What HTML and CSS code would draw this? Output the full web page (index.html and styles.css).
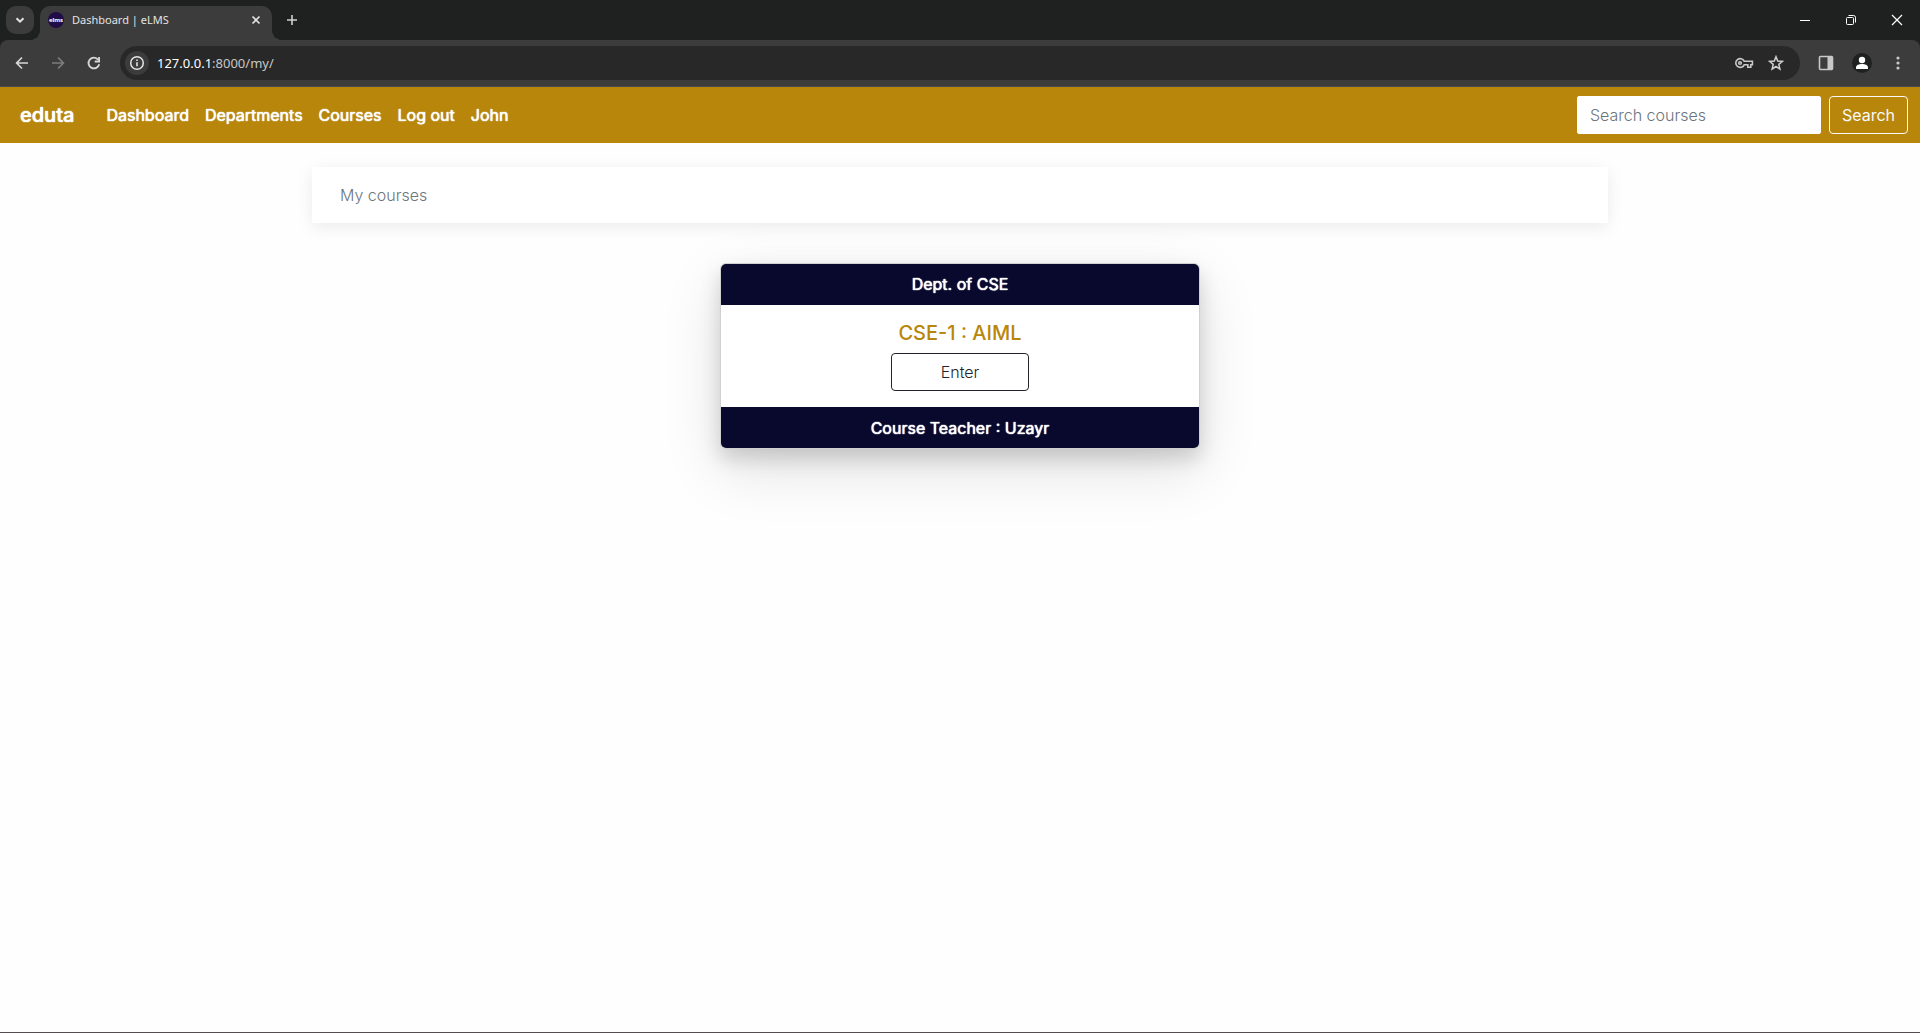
FILE: index.html
```html
<!DOCTYPE html>
<html lang="en">
<head>
<meta charset="utf-8">
<title>Dashboard | eLMS</title>
<link rel="stylesheet" href="styles.css">
</head>
<body>
<header class="browser">
  <div class="tabstrip">
    <button class="tab-search" aria-label="Search tabs"><svg width="28" height="28" viewBox="0 0 28 28"><path d="M10.5 12.2l3.5 3.5 3.5-3.5" fill="none" stroke="#e3e3e3" stroke-width="2"/></svg></button>
    <div class="tab">
      <svg class="favicon" width="16" height="16" viewBox="0 0 16 16"><circle cx="8" cy="8" r="8" fill="#210d48"/><text x="8" y="10" text-anchor="middle" class="favicon-text">elms</text></svg>
      <span class="tab-title">Dashboard | eLMS</span>
      <button class="icon-btn tab-close" aria-label="Close tab"><svg width="16" height="16" viewBox="0 0 16 16"><path d="M4.5 4.5l7 7M11.5 4.5l-7 7" stroke="#e3e3e3" stroke-width="1.6"/></svg></button>
    </div>
    <button class="icon-btn new-tab" aria-label="New tab"><svg width="16" height="16" viewBox="0 0 16 16"><path d="M8 3v10M3 8h10" stroke="#d0d0d0" stroke-width="1.6"/></svg></button>
    <div class="window-controls">
      <button class="icon-btn" aria-label="Minimize"><svg width="16" height="16" viewBox="0 0 16 16"><path d="M3 8.5h10" stroke="#fff"/></svg></button>
      <button class="icon-btn" aria-label="Restore"><svg width="16" height="16" viewBox="0 0 16 16" fill="none" stroke="#fff"><rect x="3.500" y="5.500" width="7" height="7" rx="1"/><path d="M5.500 3.500h5a2 2 0 0 1 2 2v5"/></svg></button>
      <button class="icon-btn" aria-label="Close"><svg width="16" height="16" viewBox="0 0 16 16"><path d="M3 3l10 10M13 3L3 13" stroke="#fff" stroke-width="1.200"/></svg></button>
    </div>
  </div>
  <div class="toolbar">
    <div class="nav-buttons">
      <button class="icon-btn" aria-label="Back"><svg width="16" height="16" viewBox="0 0 16 16"><path d="M14 8H3M8 2.500L2.600 8 8 13.500" fill="none" stroke="#d8d8d8" stroke-width="1.700"/></svg></button>
      <button class="icon-btn" aria-label="Forward"><svg width="16" height="16" viewBox="0 0 16 16"><path d="M2 8h11M8 2.500L13.400 8 8 13.500" fill="none" stroke="#7c7c7c" stroke-width="1.700"/></svg></button>
      <button class="icon-btn" aria-label="Reload"><svg width="16" height="16" viewBox="0 0 16 16"><path d="M13.200 9.200A5.400 5.400 0 1 1 12.200 4.700" fill="none" stroke="#d8d8d8" stroke-width="1.800"/><path d="M13.100 2v4.500H8.700" fill="none" stroke="#d8d8d8" stroke-width="1.800"/></svg></button>
    </div>
    <div class="omnibox">
      <button class="site-info" aria-label="Site information"><svg width="16" height="16" viewBox="0 0 16 16"><circle cx="8" cy="8" r="6.300" fill="none" stroke="#e3e3e3" stroke-width="1.500"/><path d="M8 7.200v4M8 4.500v1.600" stroke="#e3e3e3" stroke-width="1.600"/></svg></button>
      <span class="url">127.0.0.1<span class="url-rest">:8000/my/</span></span>
      <button class="icon-btn" aria-label="Passwords"><svg width="20" height="20" viewBox="0 0 20 20" fill="none" stroke="#c8c8c8" stroke-width="1.600"><path d="M10.200 8.200h8.200v3.600h-1.600v2.400h-3v-2.400h-3.600A4.400 4.400 0 1 1 10.200 8.200z"/><circle cx="6" cy="10" r="1.300"/></svg></button>
      <button class="icon-btn" aria-label="Bookmark"><svg width="16" height="16" viewBox="0 0 16 16"><path d="M8 1.700l1.700 4.300 4.700.4-3.600 3 1.100 4.600L8 11.500 4.100 14l1.100-4.600-3.600-3 4.700-.4z" fill="none" stroke="#d0d0d0" stroke-width="1.500"/></svg></button>
    </div>
    <div class="toolbar-actions">
      <button class="icon-btn" aria-label="Side panel"><svg width="16" height="16" viewBox="0 0 16 16"><rect x="1.500" y="1.500" width="13" height="13" rx="1" fill="none" stroke="#c8c8c8" stroke-width="1.600"/><path d="M9.500 1.500h5v13h-5z" fill="#c8c8c8"/></svg></button>
      <button class="icon-btn" aria-label="Profile"><svg width="20" height="20" viewBox="0 0 20 20"><circle cx="10" cy="10" r="10" fill="#1f2120"/><circle cx="10" cy="7" r="3.200" fill="#fff"/><path d="M4 16v-1.500c0-2.400 3-3.500 6-3.500s6 1.100 6 3.500V16z" fill="#fff"/></svg></button>
      <button class="icon-btn" aria-label="Menu"><svg width="16" height="16" viewBox="0 0 16 16" fill="#c8c8c8"><circle cx="8" cy="3" r="1.600"/><circle cx="8" cy="8" r="1.600"/><circle cx="8" cy="13" r="1.600"/></svg></button>
    </div>
  </div>
</header>
<nav class="navbar">
  <a class="brand" href="#">eduta</a>
  <ul class="nav-links">
    <li><a href="#">Dashboard</a></li>
    <li><a href="#">Departments</a></li>
    <li><a href="#">Courses</a></li>
    <li><a href="#">Log out</a></li>
    <li><a href="#">John</a></li>
  </ul>
  <form class="search">
    <input class="search-input" type="search" placeholder="Search courses" aria-label="Search courses">
    <button class="btn btn-light" type="button">Search</button>
  </form>
</nav>
<main class="container">
  <div class="breadcrumb">My courses</div>
  <section class="card">
    <header class="card-band card-header">Dept. of CSE</header>
    <div class="card-body">
      <h5 class="card-title">CSE-1 : AIML</h5>
      <button class="btn btn-dark" type="button">Enter</button>
    </div>
    <footer class="card-band card-footer">Course Teacher : Uzayr</footer>
  </section>
</main>
</body>
</html>
```
FILE: styles.css
```css
* { box-sizing: border-box; }

body {
  margin: 0;
  min-height: 100vh;
  display: flex;
  flex-direction: column;
  background: #fefefe;
  border-bottom: 1px solid #574a4a;
  color: #212529;
  font: 300 16px/24px Inter, sans-serif;
}

button, input { font: inherit; }
a { color: inherit; text-decoration: none; }
svg { display: block; }

/* Browser frame */
.browser {
  background: #1f2120;
  font-family: "Noto Sans", sans-serif;
  font-weight: 400;
}

.tabstrip {
  display: flex;
  align-items: center;
  height: 40px;
  padding: 0 6px;
}

.icon-btn {
  display: grid;
  place-items: center;
  padding: 0;
  border: 0;
  background: none;
}

.tab-search {
  width: 28px;
  height: 28px;
  padding: 0;
  border: 0;
  border-radius: 10px;
  background: #3c3c3c;
}

.tab {
  position: relative;
  display: flex;
  align-items: center;
  gap: 8px;
  align-self: flex-end;
  width: 232px;
  height: 34px;
  margin-left: 6px;
  padding: 0 8px 6px;
  border-radius: 10px 10px 0 0;
  background: #3c3c3c;
}

.tab::before,
.tab::after {
  content: "";
  position: absolute;
  bottom: 0;
  width: 10px;
  height: 10px;
}

.tab::before {
  left: -10px;
  background: radial-gradient(circle at 0 0, transparent 10px, #3c3c3c 10px);
}

.tab::after {
  right: -10px;
  background: radial-gradient(circle at 100% 0, transparent 10px, #3c3c3c 10px);
}

.favicon-text {
  fill: #fff;
  font: 700 6px "Noto Sans", sans-serif;
}

.tab-title {
  flex: 1;
  color: #e3e3e3;
  font-size: 11px;
  line-height: 16px;
}

.new-tab { margin-left: 12px; }

.window-controls {
  display: flex;
  gap: 30px;
  margin-left: auto;
  padding-right: 9px;
}

.toolbar {
  display: flex;
  align-items: center;
  height: 47px;
  padding: 0 14px;
  border-bottom: 1px solid #4a4a4a;
  border-radius: 8px 8px 0 0;
  background: #3c3c3c;
}

.nav-buttons {
  display: flex;
  gap: 20px;
  margin-right: 18px;
}

.omnibox {
  display: flex;
  flex: 1;
  align-items: center;
  gap: 14px;
  height: 34px;
  padding: 0 16px 0 5px;
  border-radius: 17px;
  background: #282828;
}

.site-info {
  display: grid;
  place-items: center;
  width: 24px;
  height: 24px;
  padding: 0;
  border: 0;
  border-radius: 12px;
  background: #3c3c3c;
}

.url {
  flex: 1;
  margin-left: -6px;
  color: #fff;
  font-size: 13px;
  line-height: 20px;
}

.url-rest { color: #c7c7c7; }

.toolbar-actions {
  display: flex;
  align-items: center;
  gap: 18px;
  margin-left: 18px;
}

/* Site navigation */
.navbar {
  display: flex;
  align-items: center;
  padding: 8px 12px 8px 20px;
  background: #b8860b;
  color: #fff;
}

.brand,
.nav-links,
.card-band {
  font-weight: 400;
  text-shadow: 0 0 1px currentColor, 0 0 1px currentColor;
}

.brand {
  margin-right: 32px;
  font-size: 20px;
  font-weight: 500;
  line-height: 40px;
}

.nav-links {
  display: flex;
  gap: 16px;
  margin: 0;
  padding: 0;
  list-style: none;
}

.search {
  display: flex;
  gap: 8px;
  margin-left: auto;
}

.search-input {
  width: 244px;
  height: 38px;
  padding: 6px 12px;
  border: 1px solid #fff;
  border-radius: 2px;
  background: #fff;
  color: #212529;
}

.search-input::placeholder { color: #6c757d; opacity: 1; }

.btn {
  height: 38px;
  padding: 6px 12px;
  border: 1px solid;
  border-radius: 4px;
  background: transparent;
}

.btn-light { color: #f8f9fa; font-weight: 400; }
.btn-dark { width: 138px; color: #212529; }

/* Page content */
.container {
  width: 100%;
  max-width: 1320px;
  margin: 24px auto 0;
  padding: 0 12px;
}

.breadcrumb {
  padding: 16px 28px;
  background: #fff;
  box-shadow: 0 4px 16px rgba(0, 0, 0, 0.08);
  color: #6c757d;
}

.card {
  width: 480px;
  margin: 40px auto 0;
  overflow: hidden;
  border: 1px solid #d0d0d0;
  border-radius: 6px;
  background: #fff;
  box-shadow: 0 10px 20px rgba(0, 0, 0, 0.15), 0 20px 60px rgba(0, 0, 0, 0.12);
  text-align: center;
}

.card-band {
  padding: 8px 16px;
  background: #09092d;
  color: #fff;
}

.card-header { border-bottom: 1px solid #09092d; }
.card-footer { border-top: 1px solid #09092d; }

.card-body { padding: 16px; }

.card-title {
  margin: 0 0 8px;
  color: #b8860b;
  font-size: 20px;
  font-weight: 500;
  line-height: 24px;
}
```
